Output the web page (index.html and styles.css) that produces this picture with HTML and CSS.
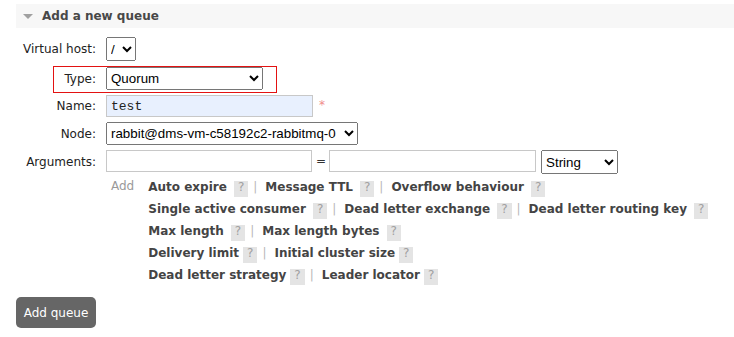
FILE: index.html
```html
<!DOCTYPE html>
<html>
<head>
<meta charset="utf-8">
<link rel="stylesheet" href="styles.css">
</head>
<body>
<div class="section">
  <div class="section-header"><span class="tri"></span><h2 class="title">Add a new queue</h2></div>
  <form class="form">
    <div class="row row-vhost"><label class="lbl">Virtual host:</label><select class="sel sel-vhost"><option>/</option></select></div>
    <div class="row row-type"><span class="mark"></span><label class="lbl">Type:</label><select class="sel sel-type"><option>Quorum</option></select></div>
    <div class="row row-name"><label class="lbl">Name:</label><input class="txt txt-name" type="text" value="test"><span class="req">*</span></div>
    <div class="row row-node"><label class="lbl">Node:</label><select class="sel sel-node"><option>rabbit@dms-vm-c58192c2-rabbitmq-0</option></select></div>
    <div class="row row-args"><label class="lbl">Arguments:</label><div class="args"><input class="txt txt-arg" type="text"><span class="eq">=</span><input class="txt txt-arg2" type="text"><select class="sel sel-string"><option>String</option></select></div></div>
  </form>
  <div class="add-args">
    <span class="add">Add</span>
    <div class="links">
      <div class="line"><span class="lk">Auto expire</span><span class="help wide">?</span><span class="sep">|</span><span class="lk">Message TTL</span><span class="help wide">?</span><span class="sep">|</span><span class="lk">Overflow behaviour</span><span class="help wide">?</span></div>
      <div class="line"><span class="lk">Single active consumer</span><span class="help wide">?</span><span class="sep">|</span><span class="lk">Dead letter exchange</span><span class="help wide">?</span><span class="sep">|</span><span class="lk">Dead letter routing key</span><span class="help wide">?</span></div>
      <div class="line"><span class="lk">Max length</span><span class="help wide">?</span><span class="sep">|</span><span class="lk">Max length bytes</span><span class="help wide">?</span></div>
      <div class="line"><span class="lk">Delivery limit</span><span class="help">?</span><span class="sep">|</span><span class="lk">Initial cluster size</span><span class="help">?</span></div>
      <div class="line"><span class="lk">Dead letter strategy</span><span class="help">?</span><span class="sep">|</span><span class="lk">Leader locator</span><span class="help">?</span></div>
    </div>
  </div>
  <button class="btn" type="button">Add queue</button>
</div>
</body>
</html>
```

FILE: styles.css
```css
html, body {
  margin: 0;
  padding: 0;
  background: #fff;
}
body {
  font-family: "DejaVu Sans", Verdana, sans-serif;
  font-size: 12px;
  color: #222;
}
.section {
  margin: 4px 0 0 16px;
}
.section-header {
  height: 24px;
  background: #f7f7f7;
  display: flex;
  align-items: center;
  padding-left: 7px;
}
.tri {
  width: 0;
  height: 0;
  border-left: 5px solid transparent;
  border-right: 5px solid transparent;
  border-top: 5px solid #a0a0a0;
  margin-right: 9px;
  margin-top: 1px;
}
.title {
  margin: 0;
  font-size: 12px;
  font-weight: bold;
  color: #484848;
}
.form {
  margin: 9px 0 0 0;
  display: flex;
  flex-direction: column;
  gap: 5px;
}
.row {
  display: flex;
  align-items: center;
}
.row-vhost {
  margin-bottom: 1px;
}
.row-type {
  position: relative;
}
.mark {
  position: absolute;
  left: 37px;
  top: -1px;
  width: 224px;
  height: 27px;
  border: 1px solid #e31212;
  box-sizing: border-box;
}
.lbl {
  width: 80px;
  text-align: right;
  margin-right: 10px;
  color: #222;
}
.sel {
  font-family: "Liberation Sans", Arial, sans-serif;
  font-size: 13.333px;
  color: #000;
  box-sizing: border-box;
  margin: 0;
}
.sel-vhost {
  width: 30px;
  height: 24px;
}
.sel-type {
  width: 157px;
  height: 23px;
}
.sel-node {
  width: 252px;
  height: 23px;
}
.sel-string {
  width: 77px;
  height: 24px;
  margin-left: 5px;
}
.txt {
  box-sizing: border-box;
  margin: 0;
  border: 1px solid #c8c8c8;
  background: #fff;
  height: 22px;
  padding: 0 4px;
  font-family: "Liberation Mono", "Courier New", monospace;
  font-size: 13px;
  color: #222;
  outline: none;
}
.txt-name {
  width: 207px;
  background: #e8f0fe;
}
.req {
  align-self: flex-start;
  color: #f08c8c;
  margin-left: 6px;
  line-height: 20px;
}
.row-args {
  align-items: flex-start;
}
.row-args .lbl {
  line-height: 24px;
}
.args {
  display: flex;
  align-items: flex-start;
}
.txt-arg {
  width: 206px;
}
.txt-arg2 {
  width: 207px;
}
.eq {
  line-height: 22px;
  margin: 0 3px 0 4px;
  color: #333;
}
.add-args {
  display: flex;
  margin: 2px 0 0 95px;
}
.add {
  color: #9a9a9a;
  line-height: 20px;
  margin-right: 14px;
}
.links {
  display: flex;
  flex-direction: column;
}
.line {
  line-height: 22px;
  white-space: nowrap;
}
.lk {
  font-weight: bold;
  color: #444;
}
.help {
  display: inline-block;
  line-height: 12px;
  padding: 0 4px 4px;
  background: #e4e4e4;
  color: #a0a0a0;
  margin-left: 4px;
}
.help.wide {
  margin-left: 7px;
}
.sep {
  color: #b8b8b8;
  margin: 0 8px 0 5px;
}
.btn {
  display: block;
  margin-top: 11px;
  width: 80px;
  height: 31px;
  border: none;
  border-radius: 5px;
  background: #666;
  color: #fff;
  font-family: "DejaVu Sans", Verdana, sans-serif;
  font-size: 12px;
  padding: 0;
}
```
